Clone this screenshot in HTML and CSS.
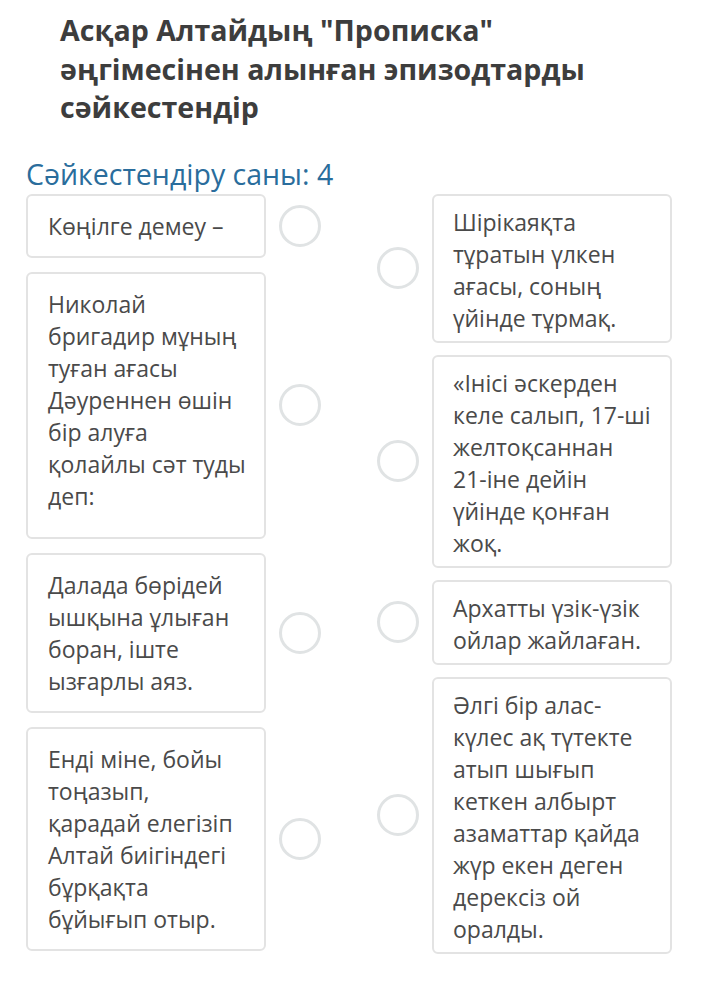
FILE: index.html
```html
<!DOCTYPE html>
<html lang="kk">
<head>
<meta charset="utf-8">
<title>Сәйкестендір</title>
<link rel="stylesheet" href="styles.css">
</head>
<body>
<main class="page">
  <h1 class="title">Асқар Алтайдың "Прописка" әңгімесінен алынған эпизодтарды сәйкестендір</h1>
  <div class="count">Сәйкестендіру саны: 4</div>
  <div class="match">
    <div class="col col-left">
      <div class="row">
        <div class="card">Көңілге демеу –</div>
        <span class="dot"></span>
      </div>
      <div class="row">
        <div class="card card-tall">Николай бригадир мұның туған ағасы Дәуреннен өшін бір алуға қолайлы сәт туды деп:</div>
        <span class="dot"></span>
      </div>
      <div class="row">
        <div class="card">Далада бөрідей ышқына ұлыған боран, іште ызғарлы аяз.</div>
        <span class="dot"></span>
      </div>
      <div class="row">
        <div class="card">Енді міне, бойы тоңазып, қарадай елегізіп Алтай биігіндегі бұрқақта бұйығып отыр.</div>
        <span class="dot"></span>
      </div>
    </div>
    <div class="col col-right">
      <div class="row">
        <span class="dot"></span>
        <div class="card card-r">Шірікаяқта тұратын үлкен ағасы, соның үйінде тұрмақ.</div>
      </div>
      <div class="row">
        <span class="dot"></span>
        <div class="card card-r">«Інісі әскерден келе салып, 17-ші желтоқсаннан 21-іне дейін үйінде қонған жоқ.</div>
      </div>
      <div class="row">
        <span class="dot"></span>
        <div class="card card-r">Архатты үзік-үзік ойлар жайлаған.</div>
      </div>
      <div class="row">
        <span class="dot"></span>
        <div class="card card-r">Әлгі бір алас-күлес ақ түтекте атып шығып кеткен албырт азаматтар қайда жүр екен деген дерексіз ой оралды.</div>
      </div>
    </div>
  </div>
</main>
</body>
</html>
```

FILE: styles.css
```css
* { box-sizing: border-box; }
html, body { margin: 0; padding: 0; background: #ffffff; }
body {
  font-family: "Open Sans", "Noto Sans", "DejaVu Sans", sans-serif;
  color: #4a4a4a;
  width: 709px;
}
.page {
  padding: 11px 37px 30px 26px;
}
.title {
  margin: 0 0 0 34px;
  font-size: 28.6px;
  line-height: 38.5px;
  font-weight: 700;
  color: #3d3d3d;
  width: 580px;
}
.count {
  margin-top: 29px;
  font-size: 28.5px;
  line-height: 36px;
  color: #2a6d9c;
  font-weight: 400;
}
.match {
  margin-top: 2px;
  display: flex;
  gap: 56px;
}
.col {
  width: 295px;
  display: flex;
  flex-direction: column;
}
.col-left { gap: 14px; }
.col-right { gap: 12px; }
.row {
  display: flex;
  align-items: center;
  gap: 13px;
}
.card {
  width: 240px;
  flex: none;
  border: 2px solid #e3e3e3;
  border-radius: 6px;
  padding: 14px 17px 14px 20px;
  font-size: 23px;
  line-height: 32px;
  color: #4a4a4a;
}
.card-tall { padding-bottom: 25px; }
.card-r { padding: 10px 18px 7px 19px; }
.dot {
  width: 42px;
  height: 42px;
  flex: none;
  border: 3px solid #e0e3e4;
  border-radius: 50%;
}
```
